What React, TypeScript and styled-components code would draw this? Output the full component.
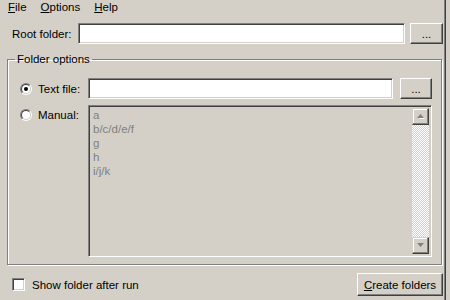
import styled, { createGlobalStyle } from "styled-components";

const GlobalStyle = createGlobalStyle`
  html, body {
    margin: 0;
    padding: 0;
    background: #d4d0c8;
  }
  body {
    font-family: "Liberation Sans", Arial, sans-serif;
    font-size: 11.5px;
    color: #000;
  }
`;

const Window = styled.div`
  width: 445px;
  height: 300px;
  box-sizing: border-box;
  border-right: 1px solid #808080;
  box-shadow: 1px 0 0 #404040;
  display: flex;
  flex-direction: column;
  overflow: hidden;
`;

const MenuBar = styled.div`
  display: flex;
  height: 15px;
  line-height: 15px;
  padding-left: 1px;
`;

const MenuItem = styled.span`
  padding: 0 7px;
`;

const Key = styled.span`
  text-decoration: underline;
`;

const RootRow = styled.div`
  display: flex;
  align-items: center;
  gap: 5px;
  margin-top: 8px;
  padding: 0 1px 0 12px;
  height: 21px;
`;

const FieldLabel = styled.span`
  flex: 0 0 61px;
  white-space: nowrap;
`;

const TextBox = styled.input`
  flex: 1;
  width: 0;
  min-width: 0;
  height: 21px;
  box-sizing: border-box;
  margin: 0;
  padding: 1px 3px;
  background: #fff;
  font: inherit;
  border: 1px solid;
  border-color: #808080 #fff #fff #808080;
  box-shadow: inset 1px 1px 0 #404040, inset -1px -1px 0 #d4d0c8;
  outline: none;
`;

const Button = styled.button<{ $w: number; $h?: number }>`
  flex: none;
  width: ${({ $w }) => $w}px;
  height: ${({ $h }) => $h ?? 21}px;
  box-sizing: border-box;
  margin: 0;
  padding: 0;
  background: #d4d0c8;
  font: inherit;
  color: #000;
  border: 1px solid;
  border-color: #fff #404040 #404040 #fff;
  box-shadow: inset -1px -1px 0 #808080, inset 1px 1px 0 #d4d0c8;
  cursor: default;
`;

const Group = styled.fieldset`
  margin: 9px 2px 0 7px;
  padding: 12px 9px 7px 12px;
  border: 1px solid #808080;
  box-shadow: inset 1px 1px 0 #fff, 1px 1px 0 #fff;
  min-width: 0;
`;

const Legend = styled.legend`
  padding: 0 2px;
  margin-left: -5px;
  line-height: 13px;
  height: 13px;
`;

const OptionRow = styled.div<{ $top?: boolean }>`
  display: flex;
  align-items: ${({ $top }) => ($top ? "flex-start" : "center")};
  gap: 7px;
  height: ${({ $top }) => ($top ? 152 : 21)}px;
  margin-top: ${({ $top }) => ($top ? 6 : 0)}px;
`;

const Option = styled.label<{ $top?: boolean }>`
  flex: 0 0 61px;
  display: flex;
  align-items: center;
  gap: 6px;
  height: 14px;
  margin-top: ${({ $top }) => ($top ? 3 : 0)}px;
`;

const Radio = styled.span<{ $checked?: boolean }>`
  position: relative;
  width: 12px;
  height: 12px;
  box-sizing: border-box;
  border-radius: 50%;
  border: 1px solid;
  border-color: #808080 #fff #fff #808080;
  flex: none;

  &::before {
    content: "";
    position: absolute;
    inset: 0;
    border-radius: 50%;
    border: 1px solid;
    border-color: #404040 #d4d0c8 #d4d0c8 #404040;
    background: #fff;
  }

  &::after {
    content: "";
    display: ${({ $checked }) => ($checked ? "block" : "none")};
    position: absolute;
    left: 3px;
    top: 3px;
    width: 4px;
    height: 4px;
    border-radius: 50%;
    background: #000;
  }
`;

const ListBox = styled.div`
  flex: 1;
  align-self: stretch;
  display: flex;
  box-sizing: border-box;
  background: #d4d0c8;
  border: 1px solid;
  border-color: #808080 #fff #fff #808080;
  box-shadow: inset 1px 1px 0 #404040, inset -1px -1px 0 #d4d0c8;
  padding: 2px;
`;

const ListText = styled.div`
  flex: 1;
  padding: 0 2px;
  color: #808080;
  line-height: 14px;
  white-space: pre;
`;

const ScrollBar = styled.div`
  width: 17px;
  display: flex;
  flex-direction: column;
  justify-content: space-between;
  background-color: #fff;
  background-image: repeating-conic-gradient(#d4d0c8 0% 25%, #fff 0% 50%);
  background-size: 2px 2px;
`;

const ScrollButton = styled.div`
  width: 17px;
  height: 17px;
  box-sizing: border-box;
  display: flex;
  align-items: center;
  justify-content: center;
  background: #d4d0c8;
  border: 1px solid;
  border-color: #d4d0c8 #404040 #404040 #d4d0c8;
  box-shadow: inset -1px -1px 0 #808080, inset 1px 1px 0 #fff;
`;

const Footer = styled.div`
  display: flex;
  align-items: center;
  justify-content: space-between;
  margin-top: 8px;
  padding: 0 1px 0 12px;
  height: 23px;
`;

const CheckLabel = styled.label`
  display: flex;
  align-items: center;
  gap: 7px;
`;

const CheckBox = styled.span`
  width: 13px;
  height: 13px;
  box-sizing: border-box;
  background: #fff;
  border: 1px solid;
  border-color: #808080 #fff #fff #808080;
  box-shadow: inset 1px 1px 0 #404040, inset -1px -1px 0 #d4d0c8;
`;

const Arrow = ({ down }: { down?: boolean }) => (
  <svg width="8" height="5" viewBox="0 0 8 5">
    <g transform={down ? "rotate(180 3.5 2)" : undefined}>
      <polygon points="4,1 8,5 0,5" fill="#fff" transform="translate(1 1)" />
      <polygon points="3.5,0 7,4 0,4" fill="#808080" />
    </g>
  </svg>
);

const folders = ["a", "b/c/d/e/f", "g", "h", "i/j/k"];

export default function App() {
  return (
    <>
      <GlobalStyle />
      <Window>
        <MenuBar>
          <MenuItem>
            <Key>F</Key>ile
          </MenuItem>
          <MenuItem>
            <Key>O</Key>ptions
          </MenuItem>
          <MenuItem>
            <Key>H</Key>elp
          </MenuItem>
        </MenuBar>

        <RootRow>
          <FieldLabel>Root folder:</FieldLabel>
          <TextBox readOnly />
          <Button $w={33}>...</Button>
        </RootRow>

        <Group>
          <Legend>Folder options</Legend>
          <OptionRow>
            <Option>
              <Radio $checked />
              Text file:
            </Option>
            <TextBox readOnly />
            <Button $w={32}>...</Button>
          </OptionRow>
          <OptionRow $top>
            <Option $top>
              <Radio />
              Manual:
            </Option>
            <ListBox>
              <ListText>{folders.join("\n")}</ListText>
              <ScrollBar>
                <ScrollButton>
                  <Arrow />
                </ScrollButton>
                <ScrollButton>
                  <Arrow down />
                </ScrollButton>
              </ScrollBar>
            </ListBox>
          </OptionRow>
        </Group>

        <Footer>
          <CheckLabel>
            <CheckBox />
            Show folder after run
          </CheckLabel>
          <Button $w={86} $h={23}>
            <Key>C</Key>reate folders
          </Button>
        </Footer>
      </Window>
    </>
  );
}
